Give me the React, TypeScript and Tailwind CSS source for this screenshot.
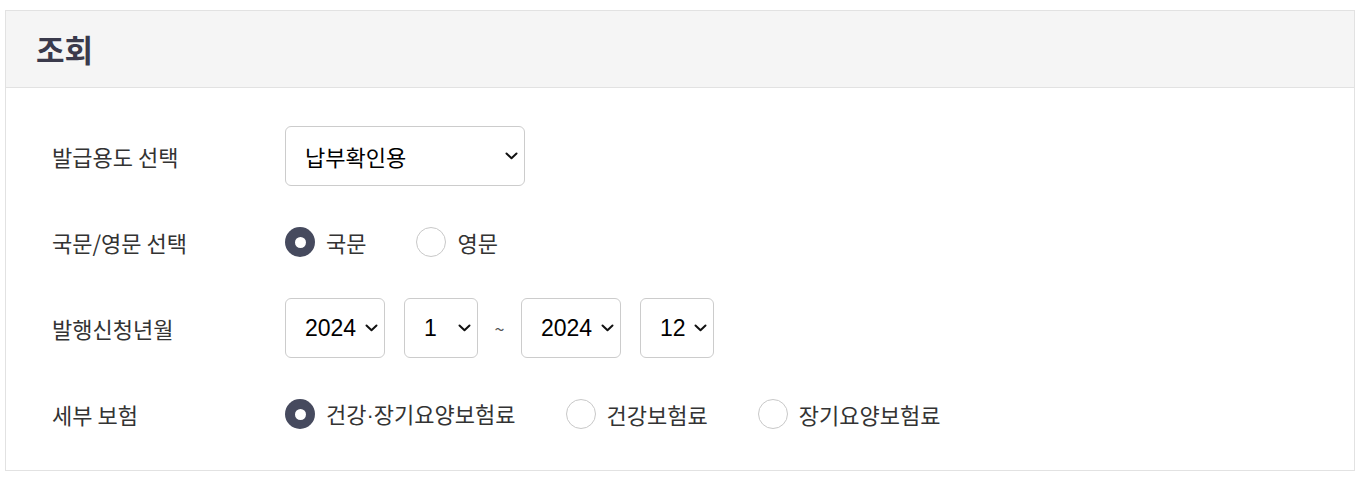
import React from "react";

const font = { fontFamily: '"Noto Sans CJK KR", "Noto Sans", sans-serif' };

const Chevron = () => (
  <svg width="13" height="8" viewBox="0 0 13 8" fill="none" className="shrink-0">
    <path d="M1.5 1.5 L6.5 6.2 L11.5 1.5" stroke="#111" strokeWidth="2" strokeLinecap="round" strokeLinejoin="round" />
  </svg>
);

const SelectBox = ({ value, width, textClass }: { value: string; width: string; textClass: string }) => (
  <div className={`flex h-[60px] ${width} items-center justify-between rounded-md border border-[#cccccc] bg-white pl-[19px] pr-[6px]`}>
    <span className={`text-black ${textClass}`}>{value}</span>
    <Chevron />
  </div>
);

const Radio = ({ label, checked }: { label: React.ReactNode; checked?: boolean }) => (
  <label className="flex items-center gap-[11px] cursor-pointer">
    {checked ? (
      <span className="flex h-[30px] w-[30px] items-center justify-center rounded-full bg-[#464a5e]">
        <span className="h-[11px] w-[11px] rounded-full bg-white" />
      </span>
    ) : (
      <span className="h-[30px] w-[30px] rounded-full border border-[#c8c8c8] bg-white" />
    )}
    <span className="text-[22px] text-[#333333]">{label}</span>
  </label>
);

const Row = ({ label, children }: { label: string; children: React.ReactNode }) => (
  <div className="flex h-[60px] items-center">
    <div className="w-[279px] shrink-0 pl-[46px] text-[22px] text-[#333333]">{label}</div>
    <div className="flex items-center">{children}</div>
  </div>
);

export default function App() {
  return (
    <div className="min-h-screen bg-white pl-[5px] pt-[10px]" style={font}>
      <div className="w-[1350px] border border-[#e2e2e2] bg-white">
        <div className="flex h-[77px] items-center border-b border-[#e2e2e2] bg-[#f5f5f5] pl-[30px]">
          <h2 className="text-[31px] font-bold text-[#3a3a4c]">조회</h2>
        </div>
        <div className="flex flex-col gap-[26px] pt-[38px] pb-[26px]">
          <Row label="발급용도 선택">
            <SelectBox value="납부확인용" width="w-[240px]" textClass="text-[22px]" />
          </Row>
          <Row label="국문/영문 선택">
            <div className="flex items-center gap-[50px]">
              <Radio label="국문" checked />
              <Radio label="영문" />
            </div>
          </Row>
          <Row label="발행신청년월">
            <div className="flex items-center gap-[19px]">
              <SelectBox value="2024" width="w-[100px]" textClass="text-[23px] font-['Liberation_Sans']" />
              <SelectBox value="1" width="w-[74px]" textClass="text-[23px] font-['Liberation_Sans']" />
              <span className="flex w-[5px] justify-center text-[18px] text-[#555555]">~</span>
              <SelectBox value="2024" width="w-[100px]" textClass="text-[23px] font-['Liberation_Sans']" />
              <SelectBox value="12" width="w-[74px]" textClass="text-[23px] font-['Liberation_Sans']" />
            </div>
          </Row>
          <Row label="세부 보험">
            <div className="flex items-center gap-[50px]">
              <Radio
                label={
                  <>
                    건강<span className="font-['Liberation_Sans']">·</span>장기요양보험료
                  </>
                }
                checked
              />
              <Radio label="건강보험료" />
              <Radio label="장기요양보험료" />
            </div>
          </Row>
        </div>
      </div>
    </div>
  );
}
